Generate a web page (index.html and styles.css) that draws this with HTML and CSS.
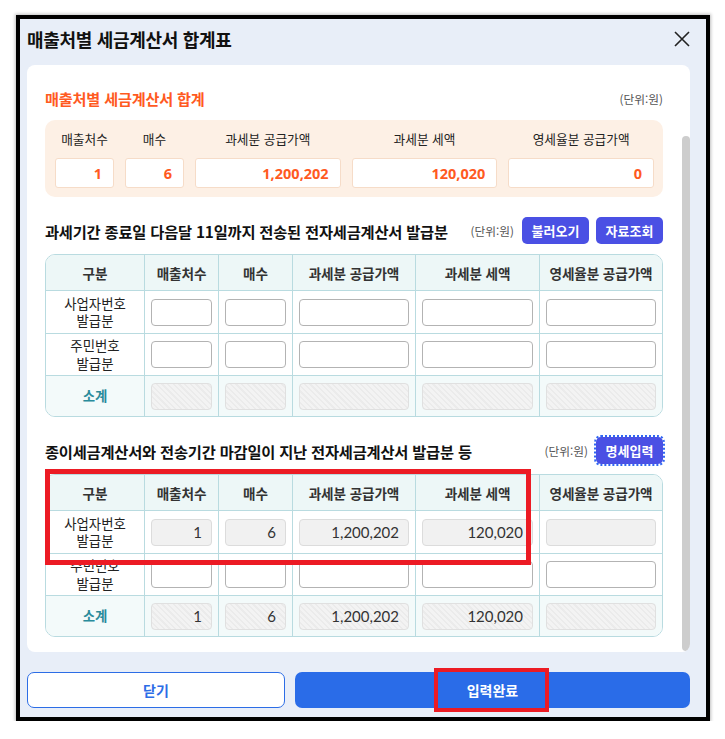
FILE: index.html
```html
<!DOCTYPE html>
<html lang="ko">
<head>
<meta charset="utf-8">
<title>매출처별 세금계산서 합계표</title>
<link rel="stylesheet" href="styles.css">
</head>
<body>
<div class="dialog">
  <header class="dlg-head">
    <h1 class="dlg-title">매출처별 세금계산서 합계표</h1>
    <button class="dlg-x" type="button" aria-label="닫기">
      <svg viewBox="0 0 16 16" width="16" height="16"><path d="M1 1L15 15M15 1L1 15" stroke="#222" stroke-width="1.6" fill="none"/></svg>
    </button>
  </header>

  <div class="panel">
    <div class="panel-body">
      <div class="sec-head first">
        <h2 class="sum-title">매출처별 세금계산서 합계</h2>
        <span class="unit">(단위:원)</span>
      </div>
      <div class="sum-box">
        <span class="sum-label">매출처수</span>
        <span class="sum-label">매수</span>
        <span class="sum-label">과세분 공급가액</span>
        <span class="sum-label">과세분 세액</span>
        <span class="sum-label">영세율분 공급가액</span>
        <input class="sum-val" type="text" value="1" readonly>
        <input class="sum-val" type="text" value="6" readonly>
        <input class="sum-val" type="text" value="1,200,202" readonly>
        <input class="sum-val" type="text" value="120,020" readonly>
        <input class="sum-val" type="text" value="0" readonly>
      </div>

      <div class="sec-head gap">
        <h3 class="sec-title">과세기간 종료일 다음달 11일까지 전송된 전자세금계산서 발급분</h3>
        <span class="unit">(단위:원)</span>
        <div class="btns">
          <button class="btn-b" type="button">불러오기</button>
          <button class="btn-b" type="button">자료조회</button>
        </div>
      </div>
      <table class="grid">
        <colgroup><col class="c1"><col class="c2"><col class="c2"><col class="c4"><col class="c5"><col></colgroup>
        <thead>
          <tr><th>구분</th><th>매출처수</th><th>매수</th><th>과세분 공급가액</th><th>과세분 세액</th><th>영세율분 공급가액</th></tr>
        </thead>
        <tbody>
          <tr class="r1">
            <td class="lab">사업자번호<br>발급분</td>
            <td><input class="fld" type="text"></td><td><input class="fld" type="text"></td>
            <td><input class="fld" type="text"></td><td><input class="fld" type="text"></td><td><input class="fld" type="text"></td>
          </tr>
          <tr class="r2">
            <td class="lab">주민번호<br>발급분</td>
            <td><input class="fld" type="text"></td><td><input class="fld" type="text"></td>
            <td><input class="fld" type="text"></td><td><input class="fld" type="text"></td><td><input class="fld" type="text"></td>
          </tr>
          <tr class="r3">
            <td class="lab subtotal">소계</td>
            <td><input class="fld hatch" type="text" disabled></td><td><input class="fld hatch" type="text" disabled></td>
            <td><input class="fld hatch" type="text" disabled></td><td><input class="fld hatch" type="text" disabled></td><td><input class="fld hatch" type="text" disabled></td>
          </tr>
        </tbody>
      </table>

      <div class="sec-head gap">
        <h3 class="sec-title">종이세금계산서와 전송기간 마감일이 지난 전자세금계산서 발급분 등</h3>
        <span class="unit">(단위:원)</span>
        <div class="btns">
          <button class="btn-b focus" type="button">명세입력</button>
        </div>
      </div>
      <table class="grid">
        <colgroup><col class="c1"><col class="c2"><col class="c2"><col class="c4"><col class="c5"><col></colgroup>
        <thead>
          <tr><th>구분</th><th>매출처수</th><th>매수</th><th>과세분 공급가액</th><th>과세분 세액</th><th>영세율분 공급가액</th></tr>
        </thead>
        <tbody>
          <tr class="r1">
            <td class="lab">사업자번호<br>발급분</td>
            <td><input class="fld ro" type="text" value="1" readonly></td><td><input class="fld ro" type="text" value="6" readonly></td>
            <td><input class="fld ro" type="text" value="1,200,202" readonly></td><td><input class="fld ro" type="text" value="120,020" readonly></td><td><input class="fld ro" type="text" readonly></td>
          </tr>
          <tr class="r2">
            <td class="lab">주민번호<br>발급분</td>
            <td><input class="fld" type="text"></td><td><input class="fld" type="text"></td>
            <td><input class="fld" type="text"></td><td><input class="fld" type="text"></td><td><input class="fld" type="text"></td>
          </tr>
          <tr class="r3">
            <td class="lab subtotal">소계</td>
            <td><input class="fld hatch" type="text" value="1" disabled></td><td><input class="fld hatch" type="text" value="6" disabled></td>
            <td><input class="fld hatch" type="text" value="1,200,202" disabled></td><td><input class="fld hatch" type="text" value="120,020" disabled></td><td><input class="fld hatch" type="text" disabled></td>
          </tr>
        </tbody>
      </table>
    </div>
    <div class="scroll"><div class="thumb"></div></div>
  </div>

  <footer class="dlg-foot">
    <button class="btn-cancel" type="button">닫기</button>
    <button class="btn-ok" type="button">입력완료</button>
  </footer>

  <div class="mark mark-tbl"></div>
  <div class="mark mark-done"></div>
</div>
</body>
</html>
```

FILE: styles.css
```css
* { box-sizing: border-box; }

body {
  margin: 0;
  background: #fff;
  font-family: "Noto Sans CJK KR", "Noto Sans", sans-serif;
  color: #222;
}

/* dialog frame */
.dialog {
  position: relative;
  margin: 15px 0 0 16px;
  width: 694px;
  height: 706px;
  border: 4px solid #000;
  background: #e8eef8;
  padding: 0 16px 0 7px;
  box-shadow: 0 0 3px 1px rgba(0, 0, 0, 0.25);
  display: flex;
  flex-direction: column;
}

.dlg-head {
  height: 40px;
  display: flex;
  align-items: center;
  justify-content: space-between;
}

.dlg-title {
  margin: 0;
  font-size: 18px;
  font-weight: 700;
  color: #111;
  letter-spacing: -0.3px;
}

.dlg-x {
  width: 16px;
  height: 16px;
  padding: 0;
  border: 0;
  background: none;
  display: flex;
}

/* scrolling content panel */
.panel {
  margin-top: 6px;
  height: 587px;
  background: #fff;
  border-radius: 8px;
  display: flex;
  overflow: hidden;
}

.panel-body {
  flex: 1;
  padding: 23px 19px 0 18px;
}

.scroll { width: 8px; }

.thumb {
  margin-top: 71px;
  height: 515px;
  background: #cdcdcd;
  border-radius: 4px;
}

/* section heading rows */
.sec-head {
  display: flex;
  align-items: center;
  height: 27px;
}

.sec-head.first { height: 20px; }
.sec-head.gap { margin-top: 20px; }

.sum-title {
  flex: 1;
  margin: 0;
  font-size: 15.2px;
  font-weight: 700;
  color: #ff5a1f;
  letter-spacing: -0.2px;
}

.sec-title {
  flex: 1;
  margin: 0;
  font-size: 15.3px;
  font-weight: 700;
  color: #111;
  letter-spacing: -0.2px;
}

.unit {
  font-size: 11.7px;
  color: #555;
}

.btns {
  display: flex;
  gap: 7px;
  margin-left: 8px;
}

.btn-b {
  width: 67px;
  height: 27px;
  border: 0;
  border-radius: 5px;
  background: #4a50e4;
  color: #fff;
  font: 700 13px "Noto Sans CJK KR", sans-serif;
  padding: 0;
}

.btn-b.focus { outline: 2px dotted #2f66f2; }

/* summary box */
.sum-box {
  margin-top: 12px;
  background: #fdf0e5;
  border-radius: 10px;
  padding: 10px 9px 9px 10px;
  display: grid;
  grid-template-columns: 59px 59px 1fr 1fr 1fr;
  column-gap: 11px;
  row-gap: 10px;
}

.sum-label {
  text-align: center;
  font-size: 12.7px;
  line-height: 18px;
  color: #222;
}

.sum-val {
  width: 100%;
  height: 30px;
  border: 1px solid #f6dcc8;
  border-radius: 3px;
  background: #fff;
  text-align: right;
  padding: 0 11px 0 0;
  font: 700 14.5px "Noto Sans", sans-serif;
  color: #ff5a1f;
}

/* data tables */
.grid {
  margin-top: 10px;
  width: 100%;
  table-layout: fixed;
  border-collapse: separate;
  border-spacing: 0;
  border: 1px solid #b9dbe0;
  border-radius: 10px;
}

.grid col.c1 { width: 98px; }
.grid col.c2 { width: 74px; }
.grid col.c4 { width: 123px; }
.grid col.c5 { width: 124px; }

.grid th,
.grid td {
  border-left: 1px solid #b9dbe0;
  border-top: 1px solid #b9dbe0;
  padding: 0 6px;
  text-align: center;
  vertical-align: middle;
}

.grid tr > :first-child { border-left: 0; }

.grid thead tr { height: 35px; }

.grid thead th {
  border-top: 0;
  background: #edf7f7;
  font-size: 13.6px;
  font-weight: 700;
  color: #333;
  letter-spacing: -0.1px;
}

.grid thead th:first-child { border-top-left-radius: 9px; }
.grid thead th:last-child { border-top-right-radius: 9px; }

.grid tr.r1 { height: 43px; }
.grid tr.r2 { height: 42px; }
.grid tr.r3 { height: 41px; }

.grid tr.r3 td { background: #f3fafa; }
.grid tr.r3 td:first-child { border-bottom-left-radius: 9px; }
.grid tr.r3 td:last-child { border-bottom-right-radius: 9px; }

.lab {
  font-size: 13.4px;
  line-height: 17.5px;
  color: #222;
}

.lab.subtotal {
  color: #2a8b9b;
  font-weight: 700;
}

.fld {
  display: block;
  width: 100%;
  height: 27px;
  border: 1px solid #b3b3b3;
  border-radius: 4px;
  background: #fff;
  font: 15px "Lato", "Noto Sans", sans-serif;
  color: #333;
  text-align: right;
  padding: 0 9px;
}

.fld.ro {
  background: #f1f1f1;
  border-color: #dcdcdc;
}

.fld.hatch {
  background: repeating-linear-gradient(45deg, #ebebeb 0 1.5px, #f3f3f3 1.5px 4px);
  border-color: #e0e0e0;
  color: #333;
}

/* footer actions */
.dlg-foot {
  margin-top: 20px;
  height: 36px;
  display: grid;
  grid-template-columns: 258px 1fr;
  gap: 10px;
}

.btn-cancel,
.btn-ok {
  border-radius: 7px;
  font: 700 14px "Noto Sans CJK KR", sans-serif;
}

.btn-cancel {
  border: 1px solid #2c6de6;
  background: #fff;
  color: #2c6de6;
}

.btn-ok {
  border: 0;
  background: #2a6ce8;
  color: #fff;
}

/* red review markers drawn over the dialog */
.mark {
  position: absolute;
  border: 5px solid #ec1b24;
  pointer-events: none;
}

.mark-tbl {
  left: 25px;
  top: 450px;
  width: 486px;
  height: 96px;
}

.mark-done {
  left: 414px;
  top: 649px;
  width: 115px;
  height: 44px;
  border-width: 4.5px;
}
```
